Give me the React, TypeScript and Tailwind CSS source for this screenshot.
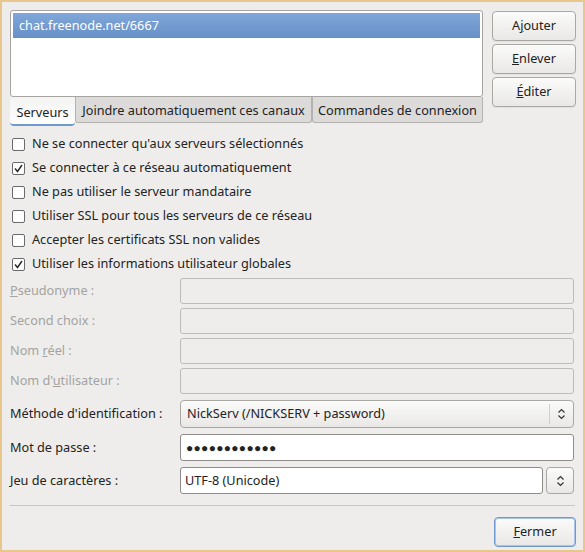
import { useState } from 'react';

const font = { fontFamily: '"Noto Sans", "Open Sans", sans-serif' };

function Button({ children, focused }: { children: React.ReactNode; focused?: boolean }) {
  return (
    <button
      className={`h-[30px] rounded-[4px] border text-[12.7px] text-[#222] bg-gradient-to-b from-[#fbfbfa] to-[#e9e8e6] shadow-[0_1px_0_rgba(0,0,0,0.05)] ${
        focused ? 'w-[82px] border-[#6f9ad0] shadow-[inset_0_0_0_1px_#a9c4e6]' : 'w-[84px] border-[#a9a8a5]'
      }`}
    >
      {children}
    </button>
  );
}

function CheckBox({ label, checked }: { label: string; checked: boolean }) {
  return (
    <label className="flex h-6 items-center gap-[7px] pl-[2px] text-[12.7px] text-[#232323]">
      <span className="flex h-[13px] w-[13px] items-center justify-center rounded-[2px] border border-[#6a6a6a] bg-white">
        {checked && (
          <svg width="11" height="11" viewBox="0 0 11 11">
            <path d="M2 5.5 L4.5 8.5 L9 2" fill="none" stroke="#2a2a2a" strokeWidth="1.5" />
          </svg>
        )}
      </span>
      <span>{label}</span>
    </label>
  );
}

function Spinner() {
  return (
    <svg width="9" height="12" viewBox="0 0 9 12">
      <path d="M1.5 4.5 L4.5 1.5 L7.5 4.5 M1.5 7.5 L4.5 10.5 L7.5 7.5" fill="none" stroke="#333" strokeWidth="1.2" />
    </svg>
  );
}

function Row({ label, disabled, children }: { label: React.ReactNode; disabled?: boolean; children: React.ReactNode }) {
  return (
    <div className="flex items-center">
      <div className={`w-[170px] text-[12.7px] ${disabled ? 'text-[#a3a3a1]' : 'text-[#232323]'}`}>{label}</div>
      <div className="flex-1">{children}</div>
    </div>
  );
}

export default function App() {
  const [tab, setTab] = useState(0);
  const tabs = [
    { label: 'Serveurs', w: 'w-[65px]' },
    { label: 'Joindre automatiquement ces canaux', w: 'w-[237px]' },
    { label: 'Commandes de connexion', w: 'w-[171px]' },
  ];
  const checks = [
    { label: "Ne se connecter qu'aux serveurs sélectionnés", checked: false },
    { label: 'Se connecter à ce réseau automatiquement', checked: true },
    { label: 'Ne pas utiliser le serveur mandataire', checked: false },
    { label: 'Utiliser SSL pour tous les serveurs de ce réseau', checked: false },
    { label: 'Accepter les certificats SSL non valides', checked: false },
    { label: 'Utiliser les informations utilisateur globales', checked: true },
  ];

  return (
    <div style={font} className="h-[552px] w-[585px] border-2 border-[#e8c68c] bg-[#eeedeb]">
      <div className="flex flex-col px-2 pt-2">
        {/* Server list + buttons */}
        <div className="flex gap-[9px]">
          <div className="w-[473px] shrink-0">
            <div className="h-[87px] rounded-[3px] border border-[#a6a5a2] bg-white p-[2px]">
              <div className="flex h-[25px] items-center bg-gradient-to-b from-[#80a7d8] to-[#6790c7] pl-[6px] text-[12.7px] text-white">
                chat.freenode.net/6667
              </div>
            </div>
            {/* Tabs */}
            <div className="flex h-[29px] items-stretch">
              {tabs.map((t, i) => (
                <button
                  key={t.label}
                  onClick={() => setTab(i)}
                  className={`${t.w} whitespace-nowrap text-[12.7px] text-[#232323] ${
                    i === tab
                      ? 'rounded-b-[4px] border-b-2 border-[#6f9ad0] bg-gradient-to-b from-[#f4f4f3] to-[#fdfdfd] pt-[4px]'
                      : 'mb-[3px] rounded-b-[3px] border border-t-0 border-[#b3b2af] bg-[#dcdbd9] pt-[2px]'
                  }`}
                >
                  {t.label}
                </button>
              ))}
            </div>
          </div>
          <div className="flex shrink-0 flex-col gap-[3px] pt-px">
            <Button>
              A<span className="underline">j</span>outer
            </Button>
            <Button>
              <span className="underline">E</span>nlever
            </Button>
            <Button>
              <span className="underline">É</span>diter
            </Button>
          </div>
        </div>

        {/* Checkboxes */}
        <div className="mt-[6px] flex flex-col">
          {checks.map((c) => (
            <CheckBox key={c.label} label={c.label} checked={c.checked} />
          ))}
        </div>

        {/* Fields */}
        <div className="mt-[2px] flex flex-col gap-[4px] pr-px">
          <Row disabled label={<><span className="underline">P</span>seudonyme :</>}>
            <div className="h-[26px] rounded-[3px] border border-[#bdbcb9] bg-[#eeedeb]" />
          </Row>
          <Row disabled label="Second choix :">
            <div className="h-[26px] rounded-[3px] border border-[#bdbcb9] bg-[#eeedeb]" />
          </Row>
          <Row disabled label={<>Nom <span className="underline">r</span>éel :</>}>
            <div className="h-[26px] rounded-[3px] border border-[#bdbcb9] bg-[#eeedeb]" />
          </Row>
          <Row disabled label={<>Nom d'<span className="underline">u</span>tilisateur :</>}>
            <div className="h-[26px] rounded-[3px] border border-[#bdbcb9] bg-[#eeedeb]" />
          </Row>
          <div className="mt-[2px] flex flex-col gap-[6px]">
            <Row label="Méthode d'identification :">
              <div className="flex h-[28px] items-center rounded-[4px] border border-[#a9a8a5] bg-gradient-to-b from-[#fbfbfa] to-[#e9e8e6] pl-[6px] text-[12.7px] text-[#232323]">
                <span className="flex-1">NickServ (/NICKSERV + password)</span>
                <span className="h-[20px] border-l border-[#d0cfcc]" />
                <span className="flex w-[23px] justify-center">
                  <Spinner />
                </span>
              </div>
            </Row>
            <Row label="Mot de passe :">
              <div className="flex h-[27px] items-center rounded-[3px] border border-[#8e8d8a] bg-white pl-[5px] text-[12px] tracking-[0.3px] text-[#232323]">
                ●●●●●●●●●●●●
              </div>
            </Row>
            <Row label="Jeu de caractères :">
              <div className="flex gap-[3px]">
                <div className="flex h-[27px] flex-1 items-center rounded-[3px] border border-[#8e8d8a] bg-white pl-[4px] text-[12.7px] text-[#232323]">
                  UTF-8 (Unicode)
                </div>
                <div className="flex h-[27px] w-[28px] items-center justify-center rounded-[4px] border border-[#a9a8a5] bg-gradient-to-b from-[#fbfbfa] to-[#e9e8e6]">
                  <Spinner />
                </div>
              </div>
            </Row>
          </div>
        </div>

        {/* Separator */}
        <div className="mt-[11px] h-px bg-[#c8c7c4]" />

        <div className="-mr-px mt-[11px] flex justify-end">
          <Button focused>
            <span className="underline">F</span>ermer
          </Button>
        </div>
      </div>
    </div>
  );
}
